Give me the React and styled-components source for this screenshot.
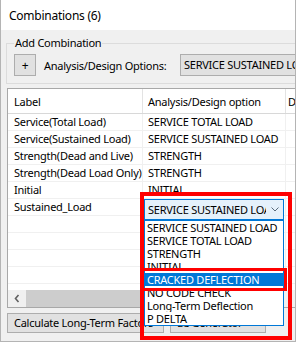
import React from "react";
import styled, { createGlobalStyle } from "styled-components";

const GlobalStyle = createGlobalStyle`
  html, body { margin: 0; padding: 0; background: #ffffff; }
  body {
    font-family: "Noto Sans", "Liberation Sans", sans-serif;
    font-size: 11px;
    letter-spacing: -0.25px;
    color: #000;
  }
  * { box-sizing: border-box; }
`;

const Window = styled.div`
  position: relative;
  width: 296px;
  height: 342px;
  border: 1px solid #b4b4b4;
  border-top: none;
  background: #f0f0f0;
  overflow: hidden;
  display: flex;
  flex-direction: column;
`;

const TitleBar = styled.div`
  flex: none;
  height: 30px;
  background: #ffffff;
  display: flex;
  align-items: center;
  padding-left: 8px;
  font-size: 12px;
`;

const Content = styled.div`
  width: 340px;
  padding: 6px 0 0 5px;
  display: flex;
  flex-direction: column;
`;

const GroupBox = styled.fieldset`
  margin: 0;
  min-width: 0;
  border: 1px solid #dcdcdc;
  padding: 4px 7px 7px 7px;
  display: flex;
  align-items: center;
`;

const Legend = styled.legend`
  padding: 0 1px;
  line-height: 14px;
`;

const PlusButton = styled.div`
  flex: none;
  width: 22px;
  height: 22px;
  border: 1px solid #adadad;
  background: #e1e1e1;
  display: flex;
  align-items: center;
  justify-content: center;
  font-size: 12px;
`;

const FieldLabel = styled.span`
  flex: none;
  width: 144px;
  padding-left: 8px;
  white-space: nowrap;
`;

const TopCombo = styled.div`
  flex: none;
  width: 150px;
  height: 22px;
  border: 1px solid #adadad;
  background: #e1e1e1;
  padding-left: 3px;
  line-height: 20px;
  white-space: nowrap;
  overflow: hidden;
`;

const Grid = styled.div`
  margin: 4px 0 0 1px;
  width: 330px;
  border: 1px solid #a8a8a8;
  background: #ffffff;
  display: flex;
  flex-direction: column;
`;

const HeaderRow = styled.div`
  display: grid;
  grid-template-columns: 135px 143px 1fr;
  height: 25px;
  border-bottom: 1px solid #d8d8d8;
`;

const HeaderCell = styled.div`
  border-right: 1px solid #e3e3e3;
  padding-left: ${p => p.pad}px;
  display: flex;
  align-items: center;
  white-space: nowrap;
  overflow: hidden;
`;

const RowsArea = styled.div`
  height: 176px;
  overflow: hidden;
`;

const Row = styled.div`
  display: grid;
  grid-template-columns: 135px 143px 1fr;
  height: 17px;
  border-bottom: 1px solid #f0f0f0;
`;

const Cell = styled.div`
  border-right: 1px solid #f0f0f0;
  padding-left: ${p => p.pad}px;
  line-height: 16px;
  white-space: nowrap;
  overflow: hidden;
`;

const ScrollBar = styled.div`
  height: 17px;
  display: flex;
  background: #f0f0f0;
`;

const ScrollArrow = styled.div`
  flex: none;
  width: 17px;
  display: flex;
  align-items: center;
  justify-content: center;
`;

const ScrollThumb = styled.div`
  flex: none;
  width: 250px;
  margin-left: 1px;
  background: #cdcdcd;
`;

const ButtonRow = styled.div`
  display: flex;
  gap: 6px;
  margin: 5px 0 0 1px;
`;

const Button = styled.div`
  flex: none;
  width: ${p => p.w}px;
  height: 20px;
  border: 1px solid #adadad;
  background: #e1e1e1;
  padding-left: 6px;
  line-height: 18px;
  white-space: nowrap;
  overflow: hidden;
`;

const Dropdown = styled.div`
  position: absolute;
  left: 143px;
  top: 199px;
  width: 140px;
  display: flex;
  flex-direction: column;
`;

const OpenCombo = styled.div`
  height: 21px;
  border: 1px solid #0078d7;
  background: #e5f1fb;
  display: flex;
  align-items: center;
`;

const OpenComboText = styled.span`
  flex: 1;
  padding-left: 3px;
  white-space: nowrap;
  overflow: hidden;
`;

const Chevron = styled.span`
  flex: none;
  width: 17px;
  display: flex;
  justify-content: center;
`;

const List = styled.div`
  border: 1px solid #0078d7;
  background: #ffffff;
`;

const Item = styled.div`
  height: 13px;
  line-height: 13px;
  padding-left: 2px;
  white-space: nowrap;
  overflow: hidden;
  background: ${p => (p.selected ? "#0078d7" : "transparent")};
  color: ${p => (p.selected ? "#ffffff" : "#000000")};
`;

const Highlight = styled.div`
  position: absolute;
  left: ${p => p.x}px;
  top: ${p => p.y}px;
  width: ${p => p.w}px;
  height: ${p => p.h}px;
  border: ${p => p.t}px solid #ff0000;
  pointer-events: none;
`;

const rows = [
  ["Service(Total Load)", "SERVICE TOTAL LOAD"],
  ["Service(Sustained Load)", "SERVICE SUSTAINED LOAD"],
  ["Strength(Dead and Live)", "STRENGTH"],
  ["Strength(Dead Load Only)", "STRENGTH"],
  ["Initial", "INITIAL"],
  ["Sustained_Load", ""],
  ["", ""], ["", ""], ["", ""], ["", ""], ["", ""],
];

const options = [
  "SERVICE SUSTAINED LOAD",
  "SERVICE TOTAL LOAD",
  "STRENGTH",
  "INITIAL",
  "CRACKED DEFLECTION",
  "NO CODE CHECK",
  "Long-Term Deflection",
  "P DELTA",
];

export default function App() {
  return (
    <>
      <GlobalStyle />
      <Window>
        <TitleBar>Combinations (6)</TitleBar>
        <Content>
          <GroupBox>
            <Legend>Add Combination</Legend>
            <PlusButton>+</PlusButton>
            <FieldLabel>Analysis/Design Options:</FieldLabel>
            <TopCombo>SERVICE SUSTAINED LOAD</TopCombo>
          </GroupBox>
          <Grid>
            <HeaderRow>
              <HeaderCell pad={6}>Label</HeaderCell>
              <HeaderCell pad={5}>Analysis/Design option</HeaderCell>
              <HeaderCell pad={2}>Design</HeaderCell>
            </HeaderRow>
            <RowsArea>
              {rows.map(([a, b], i) => (
                <Row key={i}>
                  <Cell pad={6}>{a}</Cell>
                  <Cell pad={5}>{b}</Cell>
                  <Cell pad={2} />
                </Row>
              ))}
            </RowsArea>
            <ScrollBar>
              <ScrollArrow>
                <svg width="6" height="9" viewBox="0 0 6 9">
                  <polyline points="4.5,1 1.5,4.5 4.5,8" fill="none" stroke="#606060" strokeWidth="1.6" />
                </svg>
              </ScrollArrow>
              <ScrollThumb />
            </ScrollBar>
          </Grid>
          <ButtonRow>
            <Button w={157}>Calculate Long-Term Factors</Button>
            <Button w={96}>LC Generator</Button>
          </ButtonRow>
        </Content>

        <Dropdown>
          <OpenCombo>
            <OpenComboText>SERVICE SUSTAINED LOAD</OpenComboText>
            <Chevron>
              <svg width="8" height="5" viewBox="0 0 8 5">
                <polyline points="0.5,0.5 4,4 7.5,0.5" fill="none" stroke="#5a6a7a" strokeWidth="1" />
              </svg>
            </Chevron>
          </OpenCombo>
          <List>
            {options.map((o, i) => (
              <Item key={o} selected={i === 4}>{o}</Item>
            ))}
          </List>
        </Dropdown>

        <Highlight x={139} y={192} w={152} h={148} t={4} />
        <Highlight x={139} y={268} w={147} h={23} t={3} />
      </Window>
    </>
  );
}
